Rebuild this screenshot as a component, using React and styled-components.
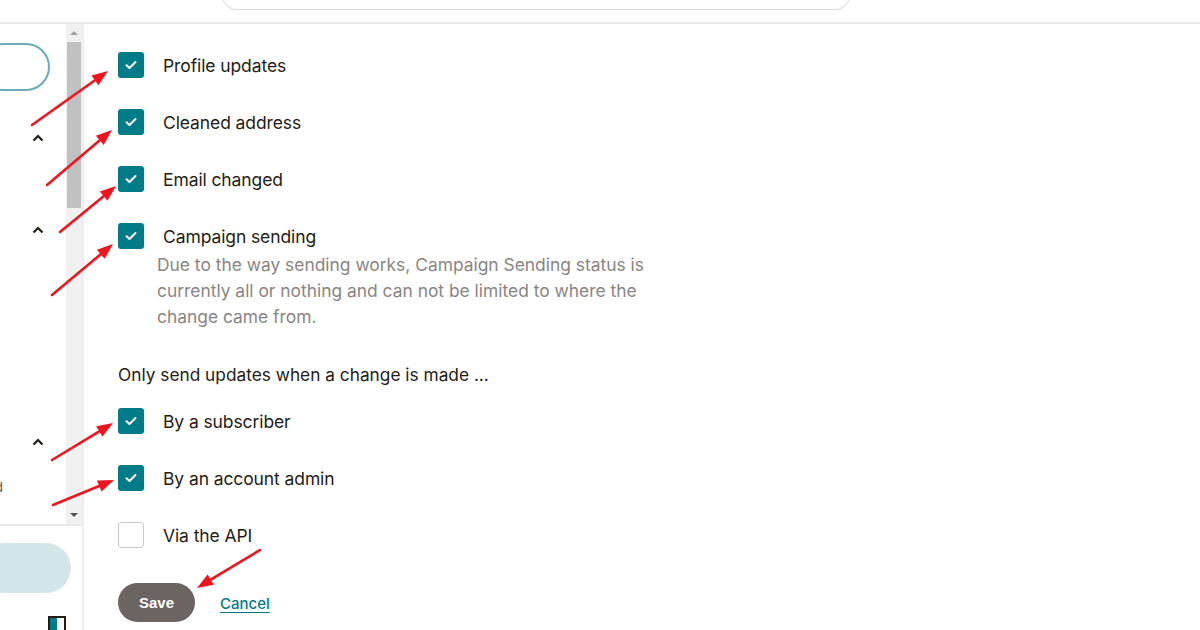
import React from 'react';
import styled, { createGlobalStyle } from 'styled-components';

const GlobalStyle = createGlobalStyle`
  html, body {
    margin: 0;
    padding: 0;
    background: #fff;
    font-family: "Inter", "Liberation Sans", sans-serif;
    overflow: hidden;
  }
`;

const Page = styled.div`
  position: relative;
  width: 1200px;
  height: 630px;
  display: flex;
  flex-direction: column;
  overflow: hidden;
`;

const Header = styled.header`
  height: 24px;
  flex: 0 0 24px;
  display: flex;
  align-items: flex-end;
  border-bottom: 2px solid #e8e8e8;
  overflow: hidden;
  padding: 0 0 12px 222px;
  box-sizing: border-box;
`;

const SearchBox = styled.div`
  width: 628px;
  height: 40px;
  flex: 0 0 auto;
  border: 1px solid #dcdcdc;
  border-radius: 14px;
  box-sizing: border-box;
`;

const Body = styled.div`
  flex: 1;
  display: flex;
  min-height: 0;
`;

const Sidebar = styled.aside`
  width: 84px;
  flex: 0 0 84px;
  display: flex;
  flex-direction: column;
  border-right: 2px solid #eeeeee;
  box-sizing: border-box;
`;

const SideTop = styled.div`
  height: 505px;
  display: flex;
  border-bottom: 2px solid #eaeaea;
  box-sizing: border-box;
`;

const SideNav = styled.div`
  width: 66px;
  position: relative;
  display: flex;
  flex-direction: column;
  padding-top: 19px;
`;

const OutlinePill = styled.div`
  width: 70px;
  height: 48px;
  margin-left: -20px;
  border: 2px solid #69adb5;
  border-radius: 24px;
  box-sizing: border-box;
`;

const Caret = styled.svg`
  width: 12px;
  height: 8px;
  margin-left: 32px;
  margin-top: ${(p) => p.$top}px;
  display: block;
`;

const CutText = styled.span`
  font-size: 13px;
  color: #555;
  margin-left: -5px;
  margin-top: 33px;
  line-height: 16px;
`;

const Scrollbar = styled.div`
  width: 16px;
  background: #f1f1f1;
  display: flex;
  flex-direction: column;
  align-items: center;
`;

const ScrollArrow = styled.div`
  width: 0;
  height: 0;
  border-left: 4px solid transparent;
  border-right: 4px solid transparent;
  ${(p) =>
    p.$down
      ? 'border-top: 4px solid #505050; margin-top: auto; margin-bottom: 7px;'
      : 'border-bottom: 4px solid #a3a3a3; margin-top: 7px;'}
`;

const Thumb = styled.div`
  width: 14px;
  height: 166px;
  background: #c1c1c1;
  margin-top: 7px;
`;

const SideBottom = styled.div`
  flex: 1;
  display: flex;
  flex-direction: column;
  padding-top: 17px;
`;

const FilledPill = styled.div`
  width: 91px;
  height: 50px;
  margin-left: -20px;
  background: #d3e7ea;
  border-radius: 25px;
`;

const MiniIcon = styled.div`
  width: 18px;
  height: 14px;
  margin: 23px 0 0 48px;
  border: 2px solid #241c15;
  border-bottom: none;
  box-sizing: border-box;
  background: linear-gradient(90deg, #007c89 50%, #fff 50%);
`;

const Main = styled.main`
  flex: 1;
  padding: 28px 0 0 34px;
  color: #241c15;
`;

const Row = styled.label`
  display: flex;
  align-items: center;
  gap: 19px;
  height: 26px;
  margin-bottom: ${(p) => (p.$last ? 0 : 31)}px;
`;

const Box = styled.span`
  width: 26px;
  height: 26px;
  flex: 0 0 26px;
  border-radius: 3px;
  box-sizing: border-box;
  display: flex;
  align-items: center;
  justify-content: center;
  background: ${(p) => (p.$checked ? '#007c89' : '#fff')};
  border: ${(p) => (p.$checked ? 'none' : '1px solid #c9c9c9')};
`;

const Label = styled.span`
  font-size: 17.5px;
  letter-spacing: -0.1px;
`;

const Note = styled.p`
  margin: 3px 0 0 39px;
  width: 520px;
  font-size: 17.4px;
  line-height: 26px;
  color: #8a8582;
`;

const Lead = styled.p`
  margin: 32px 0 20px 0;
  font-size: 17.3px;
  line-height: 26px;
`;

const Actions = styled.div`
  display: flex;
  align-items: center;
  gap: 25px;
  margin-top: 35px;
`;

const SaveButton = styled.button`
  width: 77px;
  height: 39px;
  border: none;
  border-radius: 20px;
  background: #6b6460;
  color: #fff;
  font-family: "Liberation Sans", sans-serif;
  font-weight: 700;
  font-size: 15px;
  padding: 0;
`;

const CancelLink = styled.a`
  color: #007c89;
  font-size: 15px;
  font-weight: 500;
  text-decoration: underline;
  text-underline-offset: 3px;
  margin-top: 2px;
`;

const Annotations = styled.svg`
  position: absolute;
  left: 0;
  top: 0;
  pointer-events: none;
`;

const Check = () => (
  <svg width="12" height="10" viewBox="0 0 12 10">
    <path d="M1.5 5.2 L4.5 8 L10.5 2" fill="none" stroke="#fff" strokeWidth="2" strokeLinecap="round" strokeLinejoin="round" />
  </svg>
);

const CaretUp = ({ top }) => (
  <Caret $top={top} viewBox="0 0 12 8">
    <path d="M1.5 6.5 L6 2 L10.5 6.5" fill="none" stroke="#241c15" strokeWidth="2.2" />
  </Caret>
);

const Option = ({ checked, children, last }) => (
  <Row $last={last}>
    <Box $checked={checked}>{checked && <Check />}</Box>
    <Label>{children}</Label>
  </Row>
);

const arrows = [
  [32, 125, 108, 71],
  [47, 185, 112, 130],
  [60, 232, 116, 186],
  [52, 295, 113, 244],
  [52, 460, 113, 423],
  [53, 505, 114, 480],
  [260, 550, 197, 588],
];

const Arrow = ({ x1, y1, x2, y2 }) => {
  const a = Math.atan2(y2 - y1, x2 - x1);
  const len = 16;
  const w = 6;
  const bx = x2 - len * Math.cos(a);
  const by = y2 - len * Math.sin(a);
  const px = -Math.sin(a) * w;
  const py = Math.cos(a) * w;
  return (
    <g>
      <line x1={x1} y1={y1} x2={bx} y2={by} stroke="#f0141e" strokeWidth="2.6" strokeLinecap="round" />
      <polygon points={`${x2},${y2} ${bx + px},${by + py} ${bx - px},${by - py}`} fill="#f0141e" />
    </g>
  );
};

export default function App() {
  return (
    <>
      <GlobalStyle />
      <Page>
        <Header>
          <SearchBox />
        </Header>
        <Body>
          <Sidebar>
            <SideTop>
              <SideNav>
                <OutlinePill />
                <CaretUp top={43} />
                <CaretUp top={84} />
                <CaretUp top={204} />
                <CutText>d</CutText>
              </SideNav>
              <Scrollbar>
                <ScrollArrow />
                <Thumb />
                <ScrollArrow $down />
              </Scrollbar>
            </SideTop>
            <SideBottom>
              <FilledPill />
              <MiniIcon />
            </SideBottom>
          </Sidebar>
          <Main>
            <Option checked>Profile updates</Option>
            <Option checked>Cleaned address</Option>
            <Option checked>Email changed</Option>
            <Option checked last>Campaign sending</Option>
            <Note>
              Due to the way sending works, Campaign Sending status is currently all or nothing and can not be limited to where the change came from.
            </Note>
            <Lead>Only send updates when a change is made ...</Lead>
            <Option checked>By a subscriber</Option>
            <Option checked>By an account admin</Option>
            <Option last>Via the API</Option>
            <Actions>
              <SaveButton>Save</SaveButton>
              <CancelLink href="#">Cancel</CancelLink>
            </Actions>
          </Main>
        </Body>
        <Annotations width="1200" height="630">
          {arrows.map(([x1, y1, x2, y2], i) => (
            <Arrow key={i} x1={x1} y1={y1} x2={x2} y2={y2} />
          ))}
        </Annotations>
      </Page>
    </>
  );
}
